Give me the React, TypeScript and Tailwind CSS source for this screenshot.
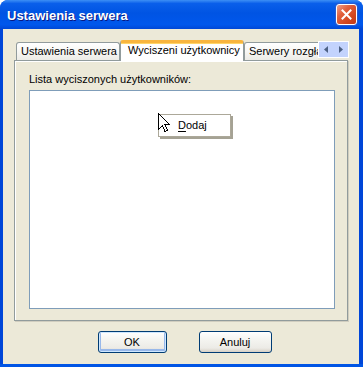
import React from "react";

const FONT = { fontFamily: '"Liberation Sans", Arial, sans-serif' };

function Cursor() {
  return (
    <svg width="12" height="20" viewBox="0 0 12 20" className="absolute left-[0px] top-[-1px]">
      <path
        d="M0.5 0.5 L0.5 16.5 L4.5 12.5 L7 18.5 L9.5 17.5 L7 11.5 L11.5 11.5 Z"
        fill="#fff"
        stroke="#000"
        strokeWidth="1"
        shapeRendering="crispEdges"
      />
    </svg>
  );
}

function CloseButton() {
  return (
    <div className="w-[21px] h-[21px] rounded-[3px] border border-white bg-[linear-gradient(135deg,#f0a08a_0%,#e2603c_35%,#d2461f_70%,#c33a15_100%)] flex items-center justify-center shadow-[0_0_0_1px_#2a5bd0]">
      <svg width="11" height="11" viewBox="0 0 11 11">
        <path d="M1.5 1.5 L9.5 9.5 M9.5 1.5 L1.5 9.5" stroke="#fff" strokeWidth="2" strokeLinecap="square" />
      </svg>
    </div>
  );
}

function XpButton({ label, primary, width }: { label: string; primary?: boolean; width: string }) {
  return (
    <div
      className={`${width} h-[22px] rounded-[3px] border border-[#003c74] bg-[linear-gradient(to_bottom,#ffffff_0%,#f4f4f0_40%,#ecebe6_80%,#d6d0c5_100%)] flex items-center justify-center text-[11px] text-black ${
        primary ? "shadow-[inset_0_0_0_1px_#cee7ff,inset_0_-1px_0_2px_#98b8ea]" : ""
      }`}
    >
      {label}
    </div>
  );
}

export default function App() {
  return (
    <div className="w-[363px] h-[367px] bg-white" style={FONT}>
      <div className="w-[363px] h-[367px] flex flex-col rounded-t-[8px] overflow-hidden bg-[#0055e5]">
        {/* pasek tytułu */}
        <div className="h-[29px] shrink-0 flex items-center justify-between pl-[7px] pr-[6px] bg-[linear-gradient(to_bottom,#3d8ff5_0%,#0a5fea_12%,#0054e3_45%,#0057ec_85%,#0047d6_100%)]">
          <span className="text-[13px] font-bold text-white [text-shadow:1px_1px_0_#0a1883] leading-none mt-[1px]">
            Ustawienia serwera
          </span>
          <CloseButton />
        </div>

        {/* ciało okna */}
        <div className="flex-1 flex ml-[3px] mr-[4px] mb-[3px] bg-[#ece9d8] flex-col pt-[11px] pl-[11px] pr-[10px] shadow-[-3px_0_0_#0046d8,4px_0_0_#0046d8]">
          {/* zakładki */}
          <div className="h-[21px] flex items-end relative z-10">
            <div className="flex-1 flex items-end overflow-hidden pl-[2px] h-[21px]">
              <div className="w-[104px] h-[18px] mb-[1px] shrink-0 rounded-t-[3px] border border-b-0 border-[#919b9c] bg-[linear-gradient(to_bottom,#ffffff_0%,#f7f7f4_50%,#ecebe6_100%)] text-[11px] text-black pl-[4px] leading-[17px] whitespace-nowrap">
                Ustawienia serwera
              </div>
              <div className="w-[124px] h-[21px] shrink-0 rounded-t-[3px] border-x border-[#919b9c] border-t-[3px] border-t-[#f8b53e] bg-white text-[11px] text-black pl-[7px] leading-[14px] whitespace-nowrap shadow-[inset_0_1px_0_#ffd569]">
                Wyciszeni użytkownicy
              </div>
              <div className="w-[120px] h-[18px] mb-[1px] shrink-0 rounded-t-[3px] border border-b-0 border-[#919b9c] bg-[linear-gradient(to_bottom,#ffffff_0%,#f7f7f4_50%,#ecebe6_100%)] text-[11px] text-black pl-[4px] leading-[17px] whitespace-nowrap">
                Serwery rozgłaszające
              </div>
            </div>
            <div className="w-[31px] h-[17px] mb-[3px] shrink-0 flex border border-white bg-[#c3d3fd]">
              <div className="flex-1 flex items-center justify-center">
                <svg width="5" height="7" viewBox="0 0 5 7">
                  <path d="M4 0 L4 7 L0 3.5 Z" fill="#4d6185" />
                </svg>
              </div>
              <div className="flex-1 flex items-center justify-center">
                <svg width="5" height="7" viewBox="0 0 5 7">
                  <path d="M1 0 L1 7 L5 3.5 Z" fill="#4d6185" />
                </svg>
              </div>
            </div>
          </div>

          {/* panel zakładki */}
          <div className="w-[334px] h-[261px] mt-[-1px] border border-[#919b9c] bg-[#ece9d8] shadow-[inset_1px_1px_0_#ffffff,1px_1px_0_#d0cdbf] flex flex-col pl-[14px] pr-[12px] pt-[11px]">
            <div className="text-[11px] text-black leading-[14px]">Lista wyciszonych użytkowników:</div>
            <div className="relative mt-[4px] h-[219px] border border-[#7f9db9] bg-white">
              <div className="absolute left-[128px] top-[23px] w-[73px] h-[23px] border border-[#aca899] bg-white shadow-[2px_2px_0_#a5a294] flex items-center pl-[19px] text-[11px] text-black">
                <span>
                  <span className="underline underline-offset-2">D</span>odaj
                </span>
              </div>
              <div className="absolute left-[128px] top-[23px] w-[12px] h-[20px]">
                <Cursor />
              </div>
            </div>
          </div>

          {/* przyciski */}
          <div className="flex justify-center gap-[32px] mt-[10px] pl-[6px]">
            <XpButton label="OK" primary width="w-[69px]" />
            <XpButton label="Anuluj" width="w-[73px]" />
          </div>
        </div>
      </div>
    </div>
  );
}
